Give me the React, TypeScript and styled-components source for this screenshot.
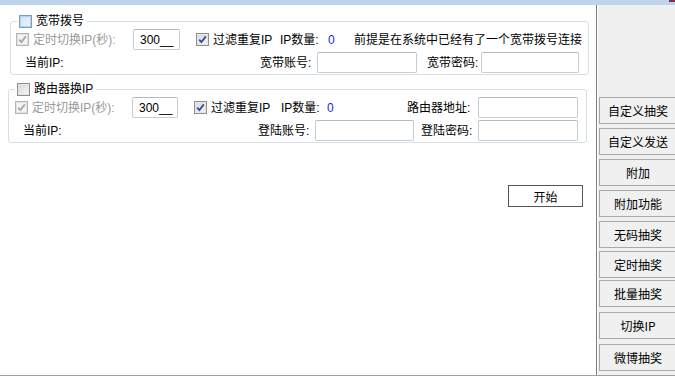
import React from "react";
import styled, { createGlobalStyle, css } from "styled-components";

const Global = createGlobalStyle`
  html, body { margin: 0; padding: 0; background: #fff; overflow: hidden; }
  body {
    font-family: "Liberation Sans", "Noto Sans CJK SC", sans-serif;
    font-size: 12px;
    color: #000;
  }
`;

const Window = styled.div`
  width: 675px;
  height: 378px;
  display: flex;
  flex-direction: column;
  background: #fff;
  overflow: hidden;
`;

const TitleStrip = styled.div`
  flex: none;
  height: 5px;
  background: #bfd4ec;
  display: flex;
  justify-content: flex-end;
`;

const CloseStub = styled.span`
  width: 6px;
  height: 2px;
  background: #7a3444;
`;

const Body = styled.div`
  flex: none;
  height: 370px;
  display: flex;
`;

const Content = styled.div`
  flex: none;
  width: 596px;
  display: flex;
  flex-direction: column;
  align-items: flex-start;
`;

const Group = styled.div<{ $mt: number; $ml: number }>`
  position: relative;
  box-sizing: border-box;
  margin-top: ${(p) => p.$mt}px;
  margin-left: ${(p) => p.$ml}px;
  width: 579px;
  height: 54px;
  border: 1px solid #d5dfe6;
  border-radius: 3px;
  padding-top: 7px;
  display: flex;
  flex-direction: column;
  gap: 2px;
`;

const Legend = styled.div`
  position: absolute;
  top: -7px;
  left: 6px;
  padding: 0 3px 0 2px;
  background: #fff;
  display: flex;
  align-items: center;
  gap: 4px;
  height: 13px;
  line-height: 13px;
  white-space: nowrap;
`;

const Row = styled.div`
  height: 21px;
  display: flex;
  align-items: center;
`;

const Text = styled.span<{ $ml?: number; $w?: number; $muted?: boolean; $blue?: boolean }>`
  flex: none;
  margin-left: ${(p) => p.$ml ?? 0}px;
  ${(p) => (p.$w ? `width: ${p.$w}px;` : "")}
  white-space: nowrap;
  line-height: 14px;
  color: ${(p) => (p.$muted ? "#9a9a9a" : p.$blue ? "#1c1cf0" : "#000")};
`;

const Field = styled.div<{ $ml?: number; $w: number }>`
  flex: none;
  box-sizing: border-box;
  margin-left: ${(p) => p.$ml ?? 0}px;
  width: ${(p) => p.$w}px;
  height: 21px;
  border: 1px solid #c5ccd4;
  border-top-color: #b3bac2;
  border-radius: 2px;
  background: #fff;
  padding-left: 6px;
  display: flex;
  align-items: center;
  font-size: 12px;
  white-space: nowrap;
`;

type BoxKind = "hover" | "plain" | "disabledChecked" | "checked";

const Box = styled.span<{ $kind: BoxKind; $ml?: number }>`
  flex: none;
  box-sizing: border-box;
  margin-left: ${(p) => p.$ml ?? 0}px;
  width: 13px;
  height: 13px;
  display: inline-flex;
  align-items: center;
  justify-content: center;
  ${(p) =>
    p.$kind === "hover"
      ? css`
          border: 1px solid #7f9db9;
          background: linear-gradient(135deg, #cfe4f7 0%, #eaf4fd 100%);
          box-shadow: inset 0 0 0 1px #b3d2ee;
        `
      : p.$kind === "disabledChecked"
      ? css`
          border: 1px solid #b4b4b4;
          background: #f3f3f3;
          box-shadow: inset 0 0 0 1px #e2e2e2;
        `
      : css`
          border: 1px solid #8e8f8f;
          background: linear-gradient(135deg, #d8d8d8 0%, #f6f6f6 100%);
          box-shadow: inset 0 0 0 1px #e6e6e6;
        `}
`;

const CheckBox = ({ kind, ml }: { kind: BoxKind; ml?: number }) => (
  <Box $kind={kind} $ml={ml}>
    {(kind === "checked" || kind === "disabledChecked") && (
      <svg width="9" height="9" viewBox="0 0 9 9">
        <path
          d="M1.2 4.6 L3.4 7 L7.8 1.4"
          fill="none"
          stroke={kind === "checked" ? "#2f4f9f" : "#a8a8a8"}
          strokeWidth="1.8"
        />
      </svg>
    )}
  </Box>
);

const StartButton = styled.div`
  box-sizing: border-box;
  margin-top: 42px;
  margin-left: 508px;
  width: 75px;
  height: 22px;
  border: 1px solid #555;
  background: #fff;
  display: flex;
  align-items: center;
  justify-content: center;
  font-family: "Noto Sans CJK SC", sans-serif;
`;

const Panel = styled.div`
  flex: 1;
  background: #f0f0f0;
  border-left: 1px solid #7e7e7e;
  box-shadow: inset 1px 0 0 #ffffff;
  padding: 92px 0 0 2px;
  display: flex;
  flex-direction: column;
  overflow: hidden;
`;

const SideButton = styled.div<{ $mt: number }>`
  flex: none;
  box-sizing: border-box;
  margin-top: ${(p) => p.$mt}px;
  width: 78px;
  height: 27px;
  border: 1px solid #a9a9a9;
  background: #f0f0f0;
  display: flex;
  align-items: center;
  justify-content: center;
  font-family: "Noto Sans CJK SC", sans-serif;
  font-size: 12px;
  white-space: nowrap;
`;

const BottomLine = styled.div`
  flex: none;
  height: 1px;
  background: #a0a0a0;
`;

const BottomPad = styled.div`
  flex: none;
  height: 2px;
  background: #fff;
`;

const sideButtons: { label: string; mt: number }[] = [
  { label: "自定义抽奖", mt: 0 },
  { label: "自定义发送", mt: 4 },
  { label: "附加", mt: 4 },
  { label: "附加功能", mt: 4 },
  { label: "无码抽奖", mt: 4 },
  { label: "定时抽奖", mt: 3 },
  { label: "批量抽奖", mt: 2 },
  { label: "切换IP", mt: 5 },
  { label: "微博抽奖", mt: 5 },
];

export default function App() {
  return (
    <>
      <Global />
      <Window>
        <TitleStrip>
          <CloseStub />
        </TitleStrip>
        <Body>
          <Content>
            <Group $mt={16} $ml={10}>
              <Legend>
                <CheckBox kind="hover" />
                <span>宽带拨号</span>
              </Legend>
              <Row>
                <CheckBox kind="disabledChecked" ml={5} />
                <Text $ml={4} $w={100} $muted>
                  定时切换IP(秒):
                </Text>
                <Field $w={47}>300__</Field>
                <CheckBox kind="checked" ml={16} />
                <Text $ml={4} $w={67}>
                  过滤重复IP
                </Text>
                <Text $w={48}>IP数量:</Text>
                <Text $w={26} $blue>
                  0
                </Text>
                <Text>前提是在系统中已经有了一个宽带拨号连接</Text>
              </Row>
              <Row>
                <Text $ml={14} $w={235}>
                  当前IP:
                </Text>
                <Text $w={57}>宽带账号:</Text>
                <Field $w={100} />
                <Text $ml={10} $w={54}>
                  宽带密码:
                </Text>
                <Field $w={98} />
              </Row>
            </Group>

            <Group $mt={14} $ml={8}>
              <Legend>
                <CheckBox kind="plain" />
                <span>路由器换IP</span>
              </Legend>
              <Row>
                <CheckBox kind="disabledChecked" ml={6} />
                <Text $ml={4} $w={100} $muted>
                  定时切换IP(秒):
                </Text>
                <Field $w={46}>300__</Field>
                <CheckBox kind="checked" ml={16} />
                <Text $ml={4} $w={70}>
                  过滤重复IP
                </Text>
                <Text $w={46}>IP数量:</Text>
                <Text $w={80} $blue>
                  0
                </Text>
                <Text $w={71}>路由器地址:</Text>
                <Field $w={100} />
              </Row>
              <Row>
                <Text $ml={14} $w={235}>
                  当前IP:
                </Text>
                <Text $w={57}>登陆账号:</Text>
                <Field $w={99} />
                <Text $ml={7} $w={57}>
                  登陆密码:
                </Text>
                <Field $w={100} />
              </Row>
            </Group>

            <StartButton>开始</StartButton>
          </Content>
          <Panel>
            {sideButtons.map((b) => (
              <SideButton key={b.label} $mt={b.mt}>
                {b.label}
              </SideButton>
            ))}
          </Panel>
        </Body>
        <BottomLine />
        <BottomPad />
      </Window>
    </>
  );
}
